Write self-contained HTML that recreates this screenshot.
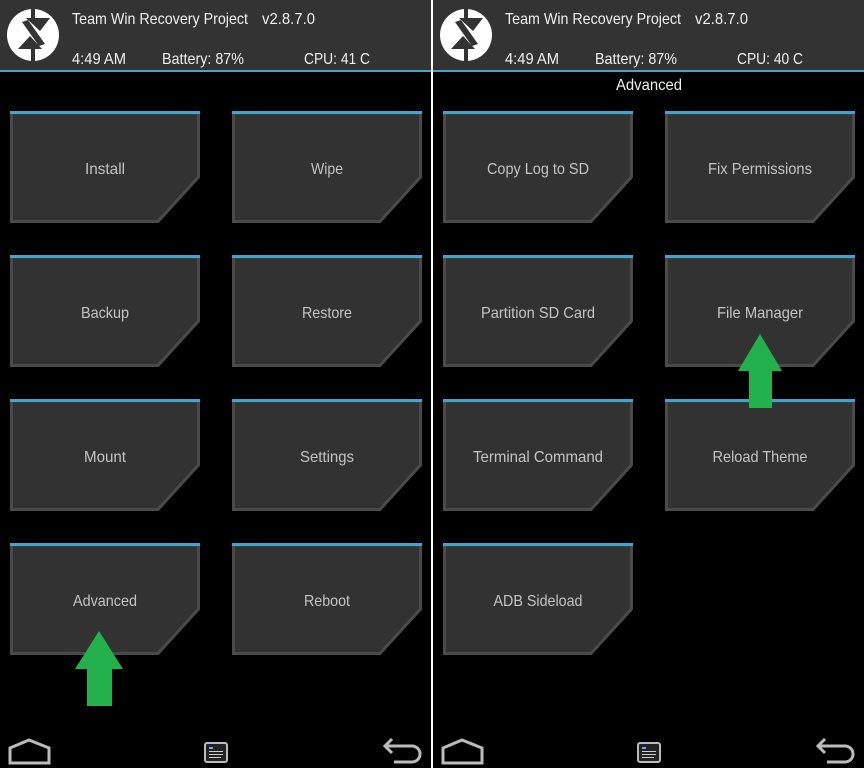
<!DOCTYPE html>
<html><head><meta charset="utf-8"><style>
html,body{margin:0;padding:0;background:#000;width:864px;height:768px;overflow:hidden}
svg{display:block}
text{font-family:"Liberation Sans",sans-serif}
</style></head><body>
<svg width="864" height="768" viewBox="0 0 864 768" xmlns="http://www.w3.org/2000/svg">
<defs>
<g id="btn">
  <path d="M1.5,2 H188.5 V66 L148,110.5 H1.5 Z" fill="#323232" stroke="#4a4a4a" stroke-width="3"/>
  <rect x="0" y="0" width="190" height="3" fill="#3ea6cc"/>
</g>
<g id="logo">
  <circle cx="33" cy="35" r="26" fill="#fff"/>
  <rect x="31" y="7" width="4" height="12" fill="#333"/>
  <polygon points="26,18 50,18 40,31" fill="#333"/>
  <polygon points="22,22 28,20 45,44 39,46" fill="#333"/>
  <polygon points="18,49 42,49 30,36" fill="#333"/>
  <rect x="31" y="48" width="4" height="15" fill="#333"/>
</g>
<g id="nav">
  <path d="M10,763 V748 L29,740 L49,748 V763 Z" fill="none" stroke="#bbb" stroke-width="3"/>
  <rect x="205" y="743" width="22" height="19" rx="2" fill="#222" stroke="#bbb" stroke-width="2"/>
  <rect x="209" y="747" width="4" height="2" fill="#6af"/>
  <rect x="209" y="751" width="14" height="1" fill="#ccc"/><rect x="209" y="754" width="14" height="1" fill="#ccc"/><rect x="209" y="757" width="12" height="1" fill="#ccc"/>
  <path d="M386,746 H412 A8,8 0 0 1 412,762 H394" fill="none" stroke="#bbb" stroke-width="3"/>
  <path d="M392,739 L385,746 L392,753" fill="none" stroke="#bbb" stroke-width="3"/>
</g>
</defs>
<rect x="0" y="0" width="864" height="70" fill="#333"/>
<rect x="0" y="70" width="864" height="2" fill="#46a6c8"/>
<rect x="431" y="0" width="2" height="768" fill="#fff"/>

<g font-size="16" fill="#f0f0f0">
<use href="#logo"/>
<text x="72" y="24" textLength="176" lengthAdjust="spacingAndGlyphs">Team Win Recovery Project</text>
<text x="262" y="24" textLength="53" lengthAdjust="spacingAndGlyphs">v2.8.7.0</text>
<text x="72" y="64" textLength="54" lengthAdjust="spacingAndGlyphs">4:49 AM</text>
<text x="162" y="64" textLength="82" lengthAdjust="spacingAndGlyphs">Battery: 87%</text>
<text x="304" y="64" textLength="66" lengthAdjust="spacingAndGlyphs">CPU: 41 C</text>

<use href="#logo" x="433"/>
<text x="505" y="24" textLength="176" lengthAdjust="spacingAndGlyphs">Team Win Recovery Project</text>
<text x="695" y="24" textLength="53" lengthAdjust="spacingAndGlyphs">v2.8.7.0</text>
<text x="505" y="64" textLength="54" lengthAdjust="spacingAndGlyphs">4:49 AM</text>
<text x="595" y="64" textLength="82" lengthAdjust="spacingAndGlyphs">Battery: 87%</text>
<text x="737" y="64" textLength="66" lengthAdjust="spacingAndGlyphs">CPU: 40 C</text>
<text x="649" y="90" text-anchor="middle" textLength="66" lengthAdjust="spacingAndGlyphs">Advanced</text>
</g>

<g font-size="16" fill="#c4c4c4" text-anchor="middle" lengthAdjust="spacingAndGlyphs">
<use href="#btn" x="10" y="111"/><text x="105" y="174" textLength="40" lengthAdjust="spacingAndGlyphs">Install</text>
<use href="#btn" x="232" y="111"/><text x="327" y="174" textLength="32" lengthAdjust="spacingAndGlyphs">Wipe</text>
<use href="#btn" x="10" y="255"/><text x="105" y="318" textLength="48" lengthAdjust="spacingAndGlyphs">Backup</text>
<use href="#btn" x="232" y="255"/><text x="327" y="318" textLength="50" lengthAdjust="spacingAndGlyphs">Restore</text>
<use href="#btn" x="10" y="399"/><text x="105" y="462" textLength="42" lengthAdjust="spacingAndGlyphs">Mount</text>
<use href="#btn" x="232" y="399"/><text x="327" y="462" textLength="54" lengthAdjust="spacingAndGlyphs">Settings</text>
<use href="#btn" x="10" y="543"/><text x="105" y="606" textLength="64" lengthAdjust="spacingAndGlyphs">Advanced</text>
<use href="#btn" x="232" y="543"/><text x="327" y="606" textLength="46" lengthAdjust="spacingAndGlyphs">Reboot</text>

<use href="#btn" x="443" y="111"/><text x="538" y="174" textLength="102" lengthAdjust="spacingAndGlyphs">Copy Log to SD</text>
<use href="#btn" x="665" y="111"/><text x="760" y="174" textLength="104" lengthAdjust="spacingAndGlyphs">Fix Permissions</text>
<use href="#btn" x="443" y="255"/><text x="538" y="318" textLength="114" lengthAdjust="spacingAndGlyphs">Partition SD Card</text>
<use href="#btn" x="665" y="255"/><text x="760" y="318" textLength="86" lengthAdjust="spacingAndGlyphs">File Manager</text>
<use href="#btn" x="443" y="399"/><text x="538" y="462" textLength="130" lengthAdjust="spacingAndGlyphs">Terminal Command</text>
<use href="#btn" x="665" y="399"/><text x="760" y="462" textLength="95" lengthAdjust="spacingAndGlyphs">Reload Theme</text>
<use href="#btn" x="443" y="543"/><text x="538" y="606" textLength="89" lengthAdjust="spacingAndGlyphs">ADB Sideload</text>
</g>

<polygon points="99,631 123,669 112,669 112,706 87,706 87,669 75,669" fill="#22b14c"/>
<polygon points="760,334 782,371 772,371 772,408 749,408 749,371 738,371" fill="#22b14c"/>

<use href="#nav"/>
<use href="#nav" x="433"/>
</svg>
</body></html>
